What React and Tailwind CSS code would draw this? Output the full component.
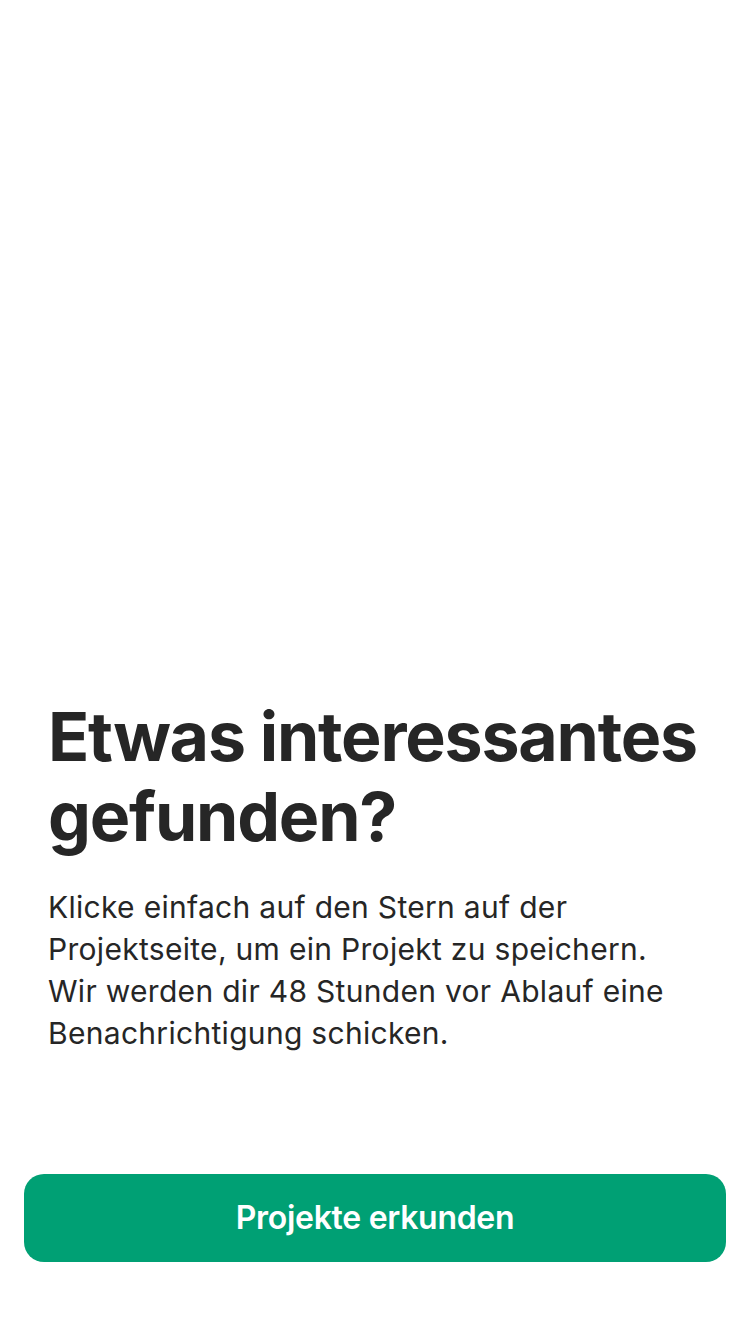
const App = () => {
  return (
    <div className="flex h-[1334px] w-[750px] flex-col bg-white font-['Inter',sans-serif] text-[#262626]">
      <div className="flex-1" />
      <div className="px-12">
        <h1 className="-mr-4 text-[68px] font-bold leading-[80px] tracking-[-1.2px]">
          Etwas interessantes gefunden?
        </h1>
        <p className="mt-[30px] text-[30px] leading-[42px] tracking-[0.3px]">
          Klicke einfach auf den Stern auf der Projektseite, um ein Projekt zu speichern. Wir werden dir 48 Stunden vor
          Ablauf eine Benachrichtigung schicken.
        </p>
      </div>
      <div className="mt-[120px] mb-[72px] px-6">
        <button className="flex h-[88px] w-full items-center justify-center rounded-[20px] bg-[#00a074] text-[32px] font-semibold tracking-[-0.3px] text-white">
          Projekte erkunden
        </button>
      </div>
    </div>
  );
};

export default App;
